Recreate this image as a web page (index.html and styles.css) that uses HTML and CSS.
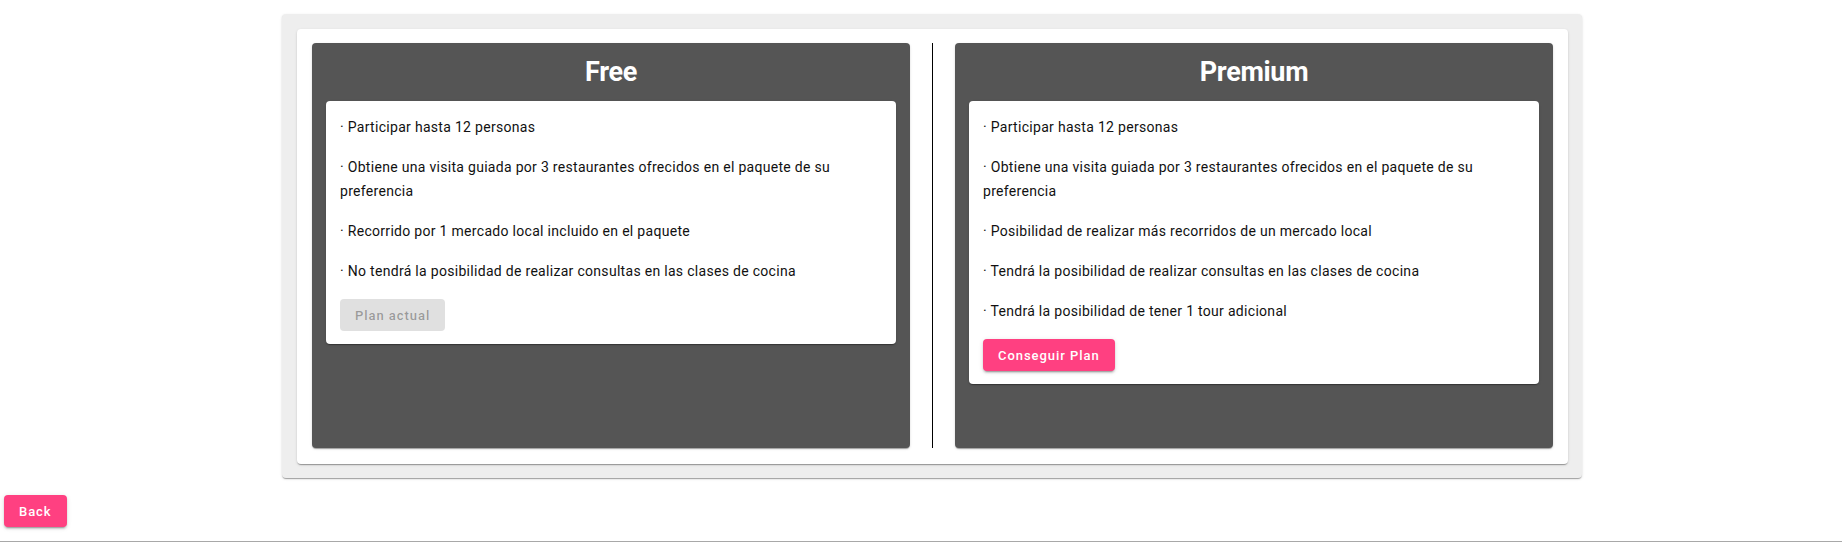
FILE: index.html
```html
<!DOCTYPE html>
<html lang="es">
<head>
<meta charset="utf-8">
<title>Planes</title>
<link rel="stylesheet" href="styles.css">
</head>
<body>
<div class="page">
  <section class="frame">
    <div class="sheet">
      <div class="plan">
        <h2 class="plan-title">Free</h2>
        <div class="plan-body">
          <p class="item">· Participar hasta 12 personas</p>
          <p class="item">· Obtiene una visita guiada por 3 restaurantes ofrecidos en el paquete de su preferencia</p>
          <p class="item">· Recorrido por 1 mercado local incluido en el paquete</p>
          <p class="item">· No tendrá la posibilidad de realizar consultas en las clases de cocina</p>
          <button class="btn btn-disabled" disabled>Plan actual</button>
        </div>
      </div>
      <div class="divider"></div>
      <div class="plan">
        <h2 class="plan-title">Premium</h2>
        <div class="plan-body">
          <p class="item">· Participar hasta 12 personas</p>
          <p class="item">· Obtiene una visita guiada por 3 restaurantes ofrecidos en el paquete de su preferencia</p>
          <p class="item">· Posibilidad de realizar más recorridos de un mercado local</p>
          <p class="item">· Tendrá la posibilidad de realizar consultas en las clases de cocina</p>
          <p class="item">· Tendrá la posibilidad de tener 1 tour adicional</p>
          <button class="btn btn-pink">Conseguir Plan</button>
        </div>
      </div>
    </div>
  </section>
  <div class="back-row">
    <button class="btn btn-pink">Back</button>
  </div>
  <div class="footer-line"></div>
</div>
</body>
</html>
```
FILE: styles.css
```css
* { box-sizing: border-box; }
html, body { margin: 0; padding: 0; background: #ffffff; }
body {
  font-family: Roboto, "Noto Sans", "Liberation Sans", sans-serif;
  color: #111111;
}
.page { width: 1842px; }

.frame {
  width: 1300px;
  margin: 14px 0 0 282px;
  padding: 15px 14px 14px 15px;
  background: #eeeeee;
  border-radius: 4px;
  box-shadow: 0 2px 1px -1px rgba(0,0,0,0.2), 0 1px 1px 0 rgba(0,0,0,0.14), 0 1px 3px 0 rgba(0,0,0,0.12);
}

.sheet {
  display: flex;
  align-items: stretch;
  gap: 22px;
  padding: 14px 15px 16px 15px;
  background: #ffffff;
  border-radius: 4px;
  box-shadow: 0 2px 1px -1px rgba(0,0,0,0.2), 0 1px 1px 0 rgba(0,0,0,0.14), 0 1px 3px 0 rgba(0,0,0,0.12);
}

.plan {
  width: 598px;
  height: 405px;
  padding: 13px 14px 14px 14px;
  background: #555555;
  border-radius: 4px;
  box-shadow: 0 2px 1px -1px rgba(0,0,0,0.2), 0 1px 1px 0 rgba(0,0,0,0.14), 0 1px 3px 0 rgba(0,0,0,0.12);
}

.divider {
  width: 1px;
  background: #000000;
}

.plan-title {
  margin: 0 0 13px 0;
  font-size: 27px;
  line-height: 32px;
  font-weight: 700;
  letter-spacing: -0.3px;
  text-align: center;
  color: #ffffff;
}

.plan-body {
  background: #ffffff;
  border-radius: 4px;
  padding: 14px 14px 13px 14px;
  box-shadow: 0 2px 1px -1px rgba(0,0,0,0.2), 0 1px 1px 0 rgba(0,0,0,0.14), 0 1px 3px 0 rgba(0,0,0,0.12);
}

.item {
  margin: 0 0 16px 0;
  font-size: 14px;
  line-height: 24px;
  letter-spacing: 0.3px;
  color: #111111;
}

.btn {
  display: inline-flex;
  align-items: center;
  justify-content: center;
  height: 32px;
  padding: 0 15px;
  border: none;
  border-radius: 4px;
  font-family: Roboto, "Noto Sans", "Liberation Sans", sans-serif;
  font-size: 13px;
  font-weight: 500;
  letter-spacing: 0.95px;
  cursor: pointer;
}

.btn-pink {
  background: #ff4081;
  color: #ffffff;
  box-shadow: 0 3px 1px -2px rgba(0,0,0,0.2), 0 2px 2px 0 rgba(0,0,0,0.14), 0 1px 5px 0 rgba(0,0,0,0.12);
}

.btn-disabled {
  background: #e0e0e0;
  color: rgba(0,0,0,0.32);
  cursor: default;
}

.back-row {
  padding: 17px 0 14px 4px;
}

.footer-line {
  height: 1px;
  background: #a8a8a8;
}
```
